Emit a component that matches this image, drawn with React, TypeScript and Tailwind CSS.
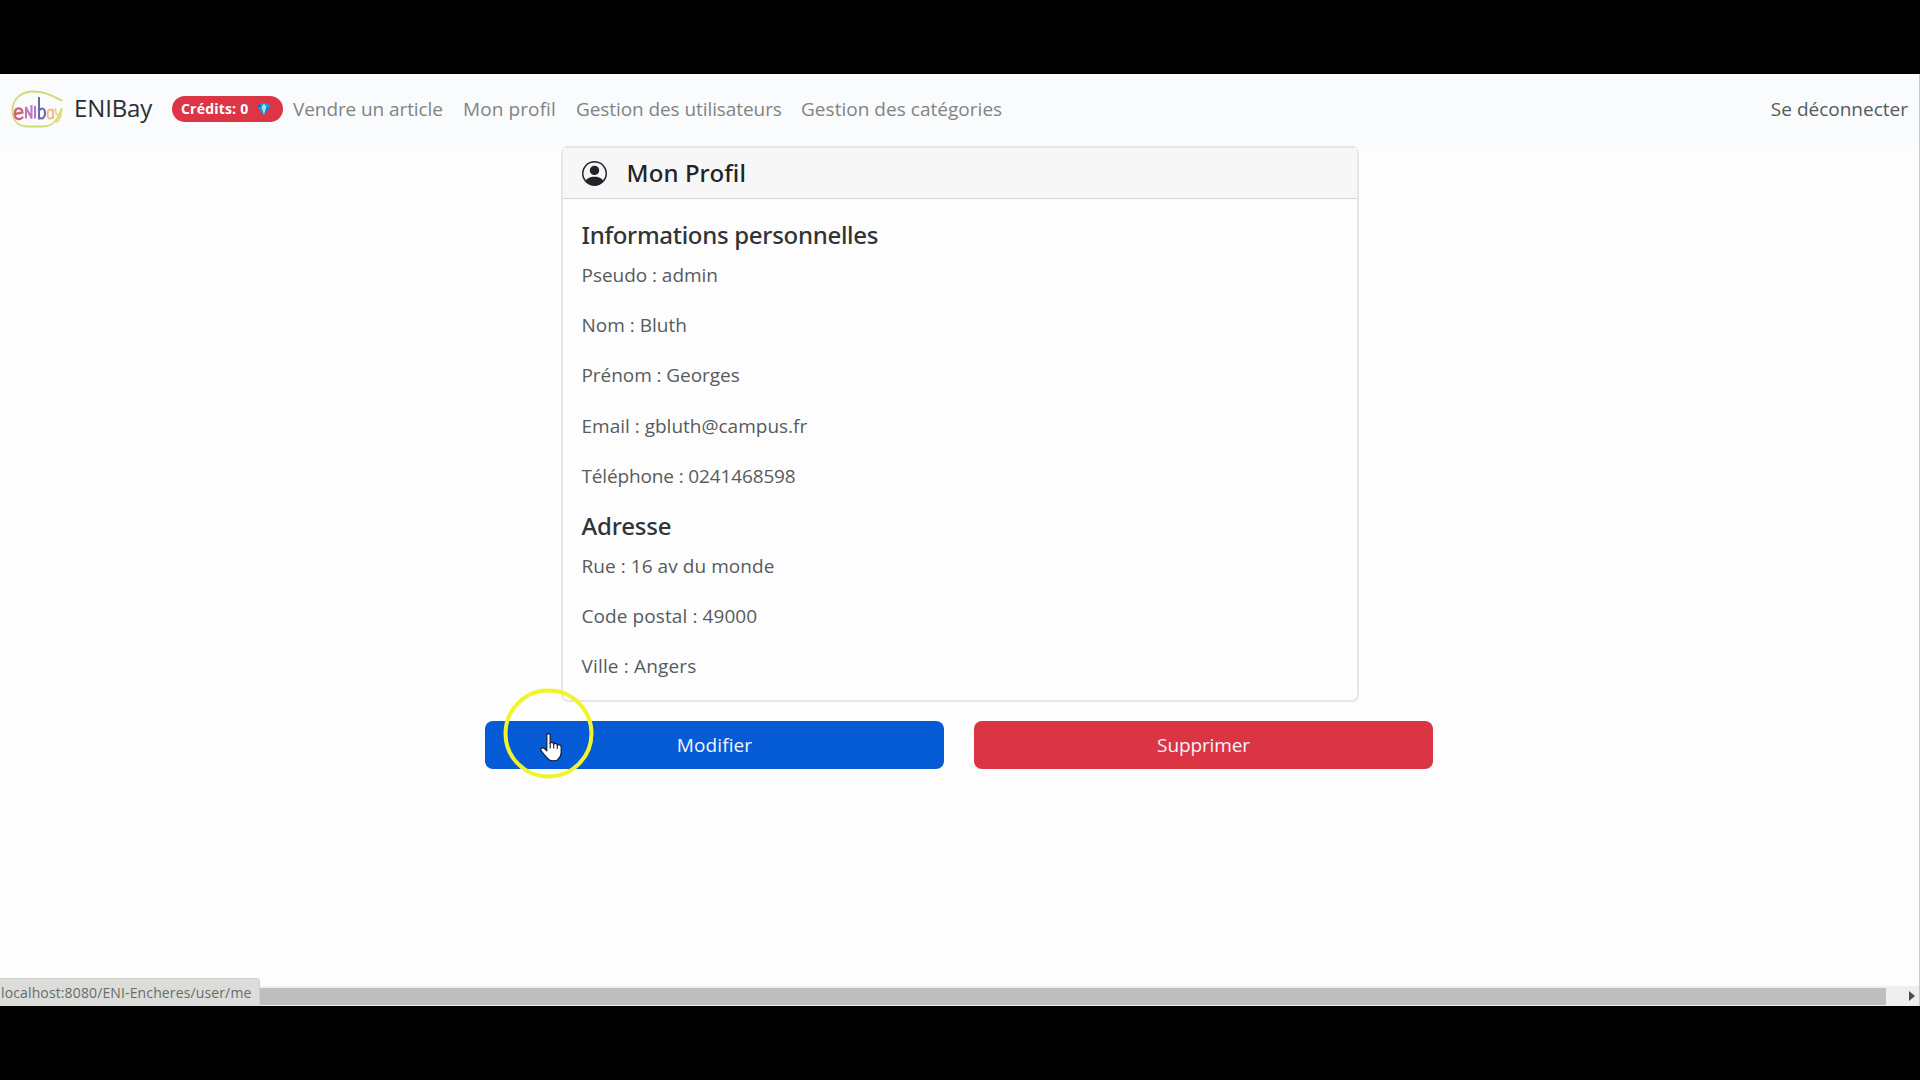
import React from "react";
import { BsPersonCircle } from "react-icons/bs";

function Logo() {
  return (
    <svg viewBox="0 0 54 38" className="h-[38px] w-[54px] shrink-0" fill="none">
      <path
        d="M51 10.500C41 6 34 1.500 23 1.500C10 1.500 1.500 9 1.500 20C1.500 31 6 36.500 18 36.500H32C42 36.500 47 30 50.500 19"
        stroke="#cfdc72"
        strokeWidth="1.8"
        strokeLinecap="round"
      />
      <path d="M4 24L11.500 22.500C11 16.500 3.800 17 3.800 23.500C3.700 30 9 30 11.500 27.500" stroke="#cf6577" strokeWidth="2.300" strokeLinecap="round" />
      <path d="M15 28.500V17.500L20.500 28V15" stroke="#c07abb" strokeWidth="2.100" strokeLinejoin="round" />
      <path d="M24 16V28.500" stroke="#a77bd2" strokeWidth="2" />
      <path d="M28 7V29.500M28 21C30 17 34 18 34 23C34 28.500 30 30 28 27" stroke="#6a68ad" strokeWidth="2" />
      <path d="M42 19V29M42 22C40.500 18 36.500 19.500 36.500 24C36.500 29.500 40.500 30 42 26" stroke="#f2bd8a" strokeWidth="2" />
      <path d="M44.500 19C44.500 26 48 27 50 20M50.500 19C50 26 48 31 45.500 32" stroke="#ecd56d" strokeWidth="1.800" strokeLinecap="round" />
    </svg>
  );
}

function Gem() {
  return (
    <svg viewBox="0 0 14 14" className="h-[14px] w-[14px]">
      <path d="M3 1.500H11L13.500 5L7 13L.5 5Z" fill="#2196d6" />
      <path d="M3 1.500L4.500 5H.5Z" fill="#1769b5" />
      <path d="M4.500 5L7 1.500L9.500 5L7 13Z" fill="#8ee6f2" />
      <path d="M9.500 5H13.500L7 13Z" fill="#1d7fc4" />
    </svg>
  );
}

function PointerHighlight() {
  return (
    <svg viewBox="0 0 92 92" className="pointer-events-none absolute left-[17px] -top-[33px] h-[92px] w-[92px]">
      <circle cx="46.500" cy="45.500" r="43" fill="none" stroke="#eff52a" strokeWidth="4" />
      <path
        d="M44.800 47.500C44.800 44.800 48.200 44.800 48.200 47.500V55.500C48.700 53.700 51.700 54 51.700 56.200C52.500 54.600 55.300 55.100 55.300 57.300C56.300 56 59.200 56.600 59.200 59V65C59.200 68.500 57.300 70.300 55.500 72C53.500 73.200 49.500 73.200 47.500 72C44.500 69.800 42 66.500 39.200 62.800C37.600 60.300 40.900 58.700 42.800 60.700L44.800 62.800Z"
        fill="#fff"
        stroke="#15233f"
        strokeWidth="1.300"
        strokeLinejoin="round"
      />
      <path d="M48.200 55V60.500M51.700 56V60.500M55.300 57V61" stroke="#15233f" strokeWidth="1.100" />
    </svg>
  );
}

function Navbar() {
  return (
    <nav className="flex h-[72px] shrink-0 items-center bg-[#f9fbfc] pb-[2px] pl-[11px] pr-[11px] text-[19px] text-[#808483]">
      <Logo />
      <a className="ml-[9px] w-[98px] whitespace-nowrap pb-[2px] text-[24px] tracking-[-0.140px] text-[#2b2f31]">ENIBay</a>
      <span className="flex h-[26px] w-[111px] items-center rounded-full bg-[#dc3545] pl-[9px] text-[14px] font-bold tracking-[0.200px] text-white">
        <span className="w-[76px] whitespace-nowrap pb-px">Crédits: 0</span>
        <Gem />
      </span>
      <a className="ml-[10px] w-[170px] whitespace-nowrap tracking-[-0.090px]">Vendre un article</a>
      <a className="w-[113px] whitespace-nowrap tracking-[0.100px]">Mon profil</a>
      <a className="w-[225px] whitespace-nowrap tracking-[-0.080px]">Gestion des utilisateurs</a>
      <a className="whitespace-nowrap tracking-[0.030px]">Gestion des catégories</a>
      <a className="ml-auto whitespace-nowrap text-[#555a5b]">Se déconnecter</a>
    </nav>
  );
}

function SectionTitle({ children, className }: { children: React.ReactNode; className: string }) {
  return (
    <h5 className={"mb-[10px] font-['Noto_Sans',sans-serif] text-[24px] font-medium leading-[30px] text-[#303435] " + className}>
      {children}
    </h5>
  );
}

function ProfileCard() {
  return (
    <section className="mx-auto flex h-[556px] w-[798px] flex-col rounded-[7px] border-2 border-[#e6e6e6]">
      <header className="flex h-[51px] shrink-0 items-center gap-[20px] border-b border-[#d6d6d0] bg-[#f7f7f7] pl-[19px]">
        <BsPersonCircle className="h-[25px] w-[25px] text-[#212529]" />
        <h5 className="font-['Noto_Sans',sans-serif] text-[24px] font-medium leading-[30px] tracking-[0.100px] text-[#212529]">
          Mon Profil
        </h5>
      </header>
      <div className="px-[19px] pt-[21px] text-[19px] leading-[30.200px] text-[#575b5d]">
        <SectionTitle className="tracking-[-0.300px]">Informations personnelles</SectionTitle>
        <div className="mb-[20px] flex flex-col gap-5">
          <p className="tracking-[-0.040px]">Pseudo : admin</p>
          <p>Nom : Bluth</p>
          <p className="tracking-[-0.060px]">Prénom : Georges</p>
          <p>Email : gbluth@campus.fr</p>
          <p className="tracking-[-0.140px]">Téléphone : 0241468598</p>
        </div>
        <SectionTitle className="tracking-[-0.180px]">Adresse</SectionTitle>
        <div className="flex flex-col gap-5">
          <p className="tracking-[0.060px]">Rue : 16 av du monde</p>
          <p className="tracking-[0.090px]">Code postal : 49000</p>
          <p className="tracking-[0.160px]">Ville : Angers</p>
        </div>
      </div>
    </section>
  );
}

export default function App() {
  return (
    <div className="flex h-[1080px] w-[1920px] flex-col overflow-hidden bg-black py-[74px] font-['Open_Sans',sans-serif]">
      <div className="flex h-[932px] flex-col border-r border-[#c9c9d2] bg-[#fdfdfe]">
        <Navbar />
        <main className="flex-1">
          <ProfileCard />
          <div className="ml-[485px] mt-[19px] flex gap-[30px] text-[19px] text-[#f3f5fb]">
            <button className="relative h-12 w-[459px] rounded-[8px] bg-[#055bd6] tracking-[0.100px]">
              Modifier
              <PointerHighlight />
            </button>
            <button className="h-12 w-[459px] rounded-[8px] bg-[#db3445] tracking-[-0.120px]">Supprimer</button>
          </div>
        </main>
        <footer className="flex h-7 shrink-0 items-end">
          <div className="flex h-7 w-[260px] items-center rounded-tr-[4px] border-r border-t border-[#cfcfcb] bg-[#dcddda] pl-[1px] text-[14px] tracking-[0.130px] text-[#686c68]">
            localhost:8080/ENI-Encheres/user/me
          </div>
          <div className="flex h-5 flex-1 items-center bg-[#efefee]">
            <div className="h-[17px] w-[1626px] bg-[#bebec0]" />
            <svg viewBox="0 0 6 10" className="ml-[23px] h-[10px] w-[6px]">
              <path d="M0 0L6 5L0 10Z" fill="#4b4b50" />
            </svg>
          </div>
        </footer>
      </div>
    </div>
  );
}
